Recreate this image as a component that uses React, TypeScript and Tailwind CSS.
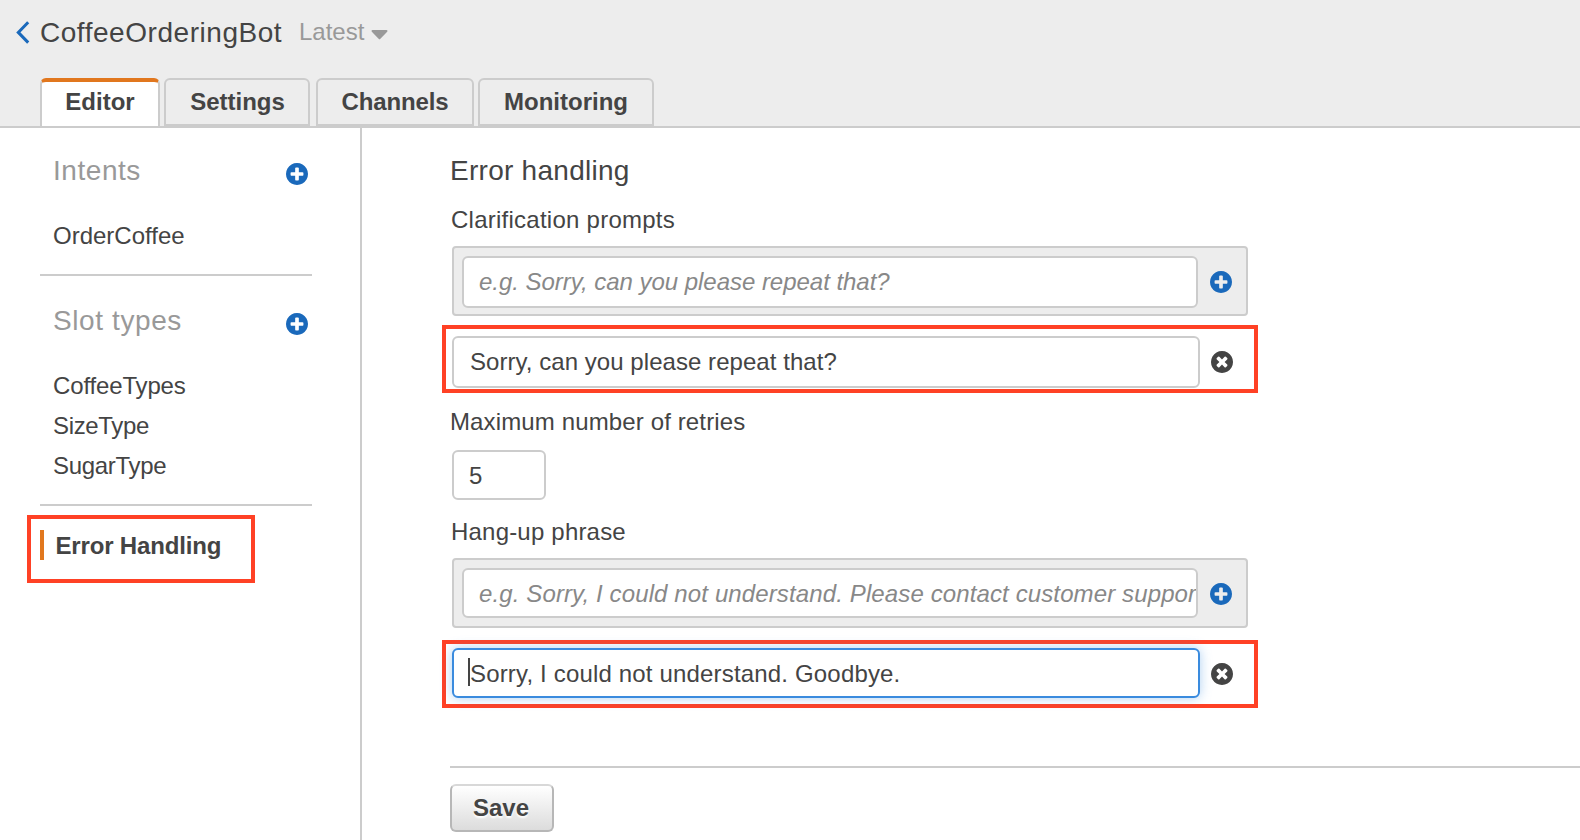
import React from "react";

const tabs = [
  { name: "Editor", box: "w-[120px]", text: "" },
  { name: "Settings", box: "w-[146px] ml-1", text: "pl-px" },
  { name: "Channels", box: "w-[158px] ml-1.5", text: "tracking-[-0.15px]" },
  { name: "Monitoring", box: "w-[176px] ml-1", text: "" },
];

function PlusCircle({ className }: { className: string }) {
  return (
    <svg className={`${className} size-[22px] shrink-0 text-[#1a69bb]`} viewBox="0 0 1536 1536" fill="currentColor">
      <path d="M1216 832v-128q0-26-19-45t-45-19h-256v-256q0-26-19-45t-45-19h-128q-26 0-45 19t-19 45v256h-256q-26 0-45 19t-19 45v128q0 26 19 45t45 19h256v256q0 26 19 45t45 19h128q26 0 45-19t19-45v-256h256q26 0 45-19t19-45zm320-64q0 209-103 385.5t-279.5 279.5-385.5 103-385.5-103-279.5-279.5-103-385.5 103-385.5 279.5-279.5 385.5-103 385.5 103 279.5 279.5 103 385.5z" />
    </svg>
  );
}

function TimesCircle({ className }: { className: string }) {
  return (
    <svg className={`${className} size-[22px] shrink-0 text-[#444]`} viewBox="128 128 1536 1536" fill="currentColor">
      <path d="M1277 1122q0-26-19-45l-181-181 181-181q19-19 19-45 0-27-19-46l-90-90q-19-19-46-19-26 0-45 19l-181 181-181-181q-19-19-45-19-27 0-46 19l-90 90q-19 19-19 46 0 26 19 45l181 181-181 181q-19 19-19 45 0 27 19 46l90 90q19 19 46 19 26 0 45-19l181-181 181 181q19 19 45 19 27 0 46-19l90-90q19-19 19-46zm387-226q0 209-103 385.5t-279.5 279.5-385.5 103-385.5-103-279.5-279.5-103-385.5 103-385.5 279.5-279.5 385.5-103 385.5 103 279.5 279.5 103 385.5z" />
    </svg>
  );
}

function Header() {
  return (
    <header className="h-32 border-b-2 border-[#ccc] bg-[#ededed]">
      <div className="flex h-[78px] items-start pt-3">
        <svg className="ml-4 mt-[9px] h-[23px] w-[14px]" viewBox="0 0 14 23" fill="none" stroke="#1a69bb" strokeWidth="3">
          <path d="M12.2 1.2 2.3 11.4l9.9 10.2" />
        </svg>
        <h1 className="ml-2.5 mt-px w-[243px] text-[28px] leading-10 tracking-[0.54px]">CoffeeOrderingBot</h1>
        <button className="ml-4 flex items-start text-2xl leading-10 text-[#999]">
          <span className="w-[72px] text-left">Latest</span>
          <svg className="mt-[18px] h-[10px] w-[17px]" viewBox="0 0 17 10" fill="#999">
            <path d="M1.5 0h14a1 1 0 0 1 .7 1.7L9.4 8.8a1.2 1.2 0 0 1-1.8 0L.8 1.7A1 1 0 0 1 1.5 0z" />
          </svg>
        </button>
      </div>
      <nav className="flex h-12 pl-10 text-2xl font-bold">
        {tabs.map((t, i) => (
          <div
            key={t.name}
            className={`${t.box} h-12 rounded-t-md border-2 border-[#ccc] text-center ${
              i === 0 ? "border-t-4 border-b-0 border-t-[#e1771e] bg-white leading-[40px]" : "leading-[44px]"
            }`}
          >
            <span className={t.text}>{t.name}</span>
          </div>
        ))}
      </nav>
    </header>
  );
}

function SidebarHeading({ children, className }: { children: string; className: string }) {
  return (
    <div className={`${className} flex h-10 items-start justify-between pl-[13px] pr-1 text-[28px] leading-10 text-[#999]`}>
      <h2 className="pt-px">{children}</h2>
      <PlusCircle className="mt-[13.4px]" />
    </div>
  );
}

function Sidebar() {
  return (
    <aside className="w-[362px] shrink-0 border-r-2 border-[#ccc] pl-10 pr-12 pt-[22px] text-2xl leading-10">
      <SidebarHeading className="tracking-[0.55px]">Intents</SidebarHeading>
      <div className="mt-[26px] pl-[13px]">OrderCoffee</div>
      <hr className="mt-[18px] border-t-2 border-[#ccc]" />
      <SidebarHeading className="mt-6 tracking-[0.6px]">Slot types</SidebarHeading>
      <ul className="mt-[26px] pl-[13px]">
        <li className="tracking-[-0.15px]">CoffeeTypes</li>
        <li className="tracking-[-0.35px]">SizeType</li>
        <li className="tracking-[-0.3px]">SugarType</li>
      </ul>
      <hr className="mt-[18px] border-t-2 border-[#ccc]" />
      <div className="relative mt-5 flex h-10 items-start font-bold">
        <span className="mt-1 h-[30px] w-1 bg-[#e1771e]" />
        <span className="ml-[11.5px] tracking-[-0.17px]">Error Handling</span>
        <span className="absolute -left-[13px] -top-[11px] h-[68px] w-[228px] border-4 border-[#ff4125]" />
      </div>
    </aside>
  );
}

function AddRow({ placeholder, className, field }: { placeholder: string; className: string; field: string }) {
  return (
    <div className={`${className} ml-0.5 flex h-[70px] w-[796px] items-start rounded border-2 border-[#ccc] bg-[#ededed] pl-2 pt-2`}>
      <input
        readOnly
        placeholder={placeholder}
        className={`${field} w-[736px] rounded-md border-2 border-[#ccc] bg-white pl-[15px] italic placeholder:text-[#888]`}
      />
      <PlusCircle className="ml-[11.5px] mt-[15.3px]" />
    </div>
  );
}

function ValueRow({ value, className, field, caret }: { value: string; className: string; field: string; caret?: boolean }) {
  return (
    <div className={`${className} relative -ml-2 flex h-[68px] w-[816px] items-start border-4 border-[#ff4125] pl-1.5`}>
      <input readOnly value={value} className={`${field} w-[748px] rounded-md border-2 bg-white pl-4`} />
      <TimesCircle className="ml-[11.4px] mt-[15.3px]" />
      {caret && <span className="absolute left-[22px] top-3.5 h-7 w-0.5 bg-[#444]" />}
    </div>
  );
}

function ErrorHandling() {
  return (
    <main className="flex-1 pl-[88px] pt-[22px] text-2xl leading-10">
      <h2 className="h-10 pt-px text-[28px] leading-10 tracking-[0.27px]">Error handling</h2>
      <div className="mt-2.5 pl-px tracking-[0.25px]">Clarification prompts</div>
      <AddRow className="mt-1.5" field="h-[52px] tracking-[-0.03px]" placeholder="e.g. Sorry, can you please repeat that?" />
      <ValueRow className="mt-[9px] pt-[7px]" field="h-[52px] border-[#ccc] tracking-[0.05px]" value="Sorry, can you please repeat that?" />
      <div className="mt-[9px] tracking-[0.13px]">Maximum number of retries</div>
      <input readOnly value="5" className="ml-0.5 mt-2 block h-[50px] w-[94px] rounded-md border-2 border-[#ccc] bg-white pl-[15px] pt-0.5" />
      <div className="mt-3 pl-px tracking-[0.2px]">Hang-up phrase</div>
      <AddRow
        className="mt-1.5"
        field="h-[50px] pt-0.5 tracking-[0.12px]"
        placeholder="e.g. Sorry, I could not understand. Please contact customer support"
      />
      <ValueRow
        className="mt-3 pt-1"
        field="h-[50px] border-[#3a8bde] pt-0.5 tracking-[0.17px] shadow-[0_0_12px_rgba(58,139,222,0.4)]"
        value="Sorry, I could not understand. Goodbye."
        caret
      />
      <hr className="mt-[58px] border-t-2 border-[#ccc]" />
      <button className="mt-4 block h-12 w-[104px] rounded-md border-2 border-[#b7b7b7] border-t-[#d8d8d8] bg-linear-to-b from-white to-[#dcdcdc] pr-0.5 text-center font-bold leading-[44px] [text-shadow:0_2px_2px_white]">
        Save
      </button>
    </main>
  );
}

export default function App() {
  return (
    <div className="flex h-[840px] w-[1580px] flex-col overflow-hidden bg-white font-['Liberation_Sans',Arial,sans-serif] text-[#444]">
      <Header />
      <div className="flex min-h-0 flex-1">
        <Sidebar />
        <ErrorHandling />
      </div>
    </div>
  );
}
